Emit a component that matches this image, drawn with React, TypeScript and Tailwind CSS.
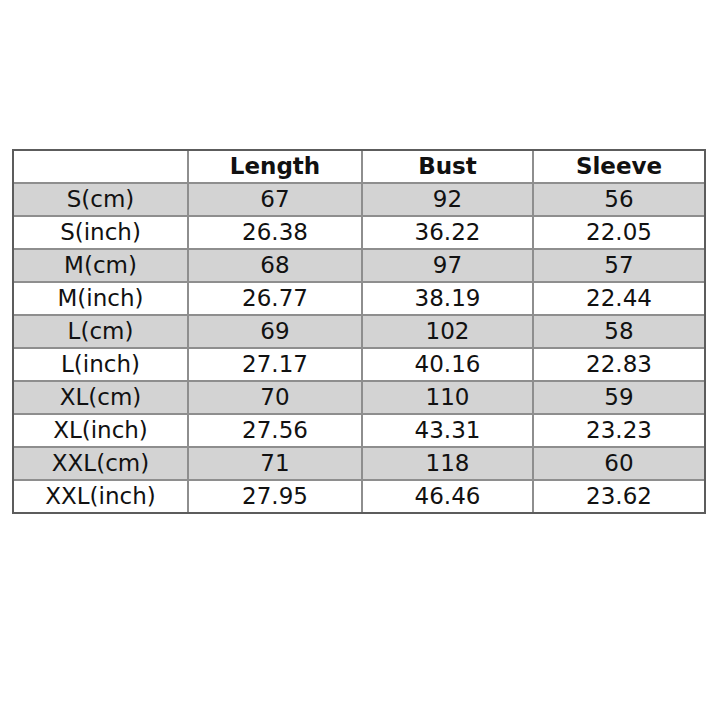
import React from "react";

const rows: [string, string, string, string][] = [
  ["S(cm)", "67", "92", "56"],
  ["S(inch)", "26.38", "36.22", "22.05"],
  ["M(cm)", "68", "97", "57"],
  ["M(inch)", "26.77", "38.19", "22.44"],
  ["L(cm)", "69", "102", "58"],
  ["L(inch)", "27.17", "40.16", "22.83"],
  ["XL(cm)", "70", "110", "59"],
  ["XL(inch)", "27.56", "43.31", "23.23"],
  ["XXL(cm)", "71", "118", "60"],
  ["XXL(inch)", "27.95", "46.46", "23.62"],
];

export default function App() {
  return (
    <div
      className="w-[720px] h-[720px] bg-white pt-[149px] pl-[12px]"
      style={{ fontFamily: '"DejaVu Sans", sans-serif' }}
    >
      <div className="w-[694px] border-2 border-[#5c5c5c] bg-[#8e8e8e] grid grid-cols-[173px_172px_169px_170px] gap-[2px] text-[23px] text-[#111]">
        <div className="bg-white h-[31px]" />
        <div className="bg-white h-[31px] flex items-center justify-center font-bold">Length</div>
        <div className="bg-white h-[31px] flex items-center justify-center font-bold">Bust</div>
        <div className="bg-white h-[31px] flex items-center justify-center font-bold">Sleeve</div>
        {rows.map((r, i) => (
          <React.Fragment key={i}>
            {r.map((c, j) => (
              <div
                key={j}
                className={
                  i % 2 === 0
                    ? "bg-[#d3d3d3] h-[31px] flex items-center justify-center leading-none"
                    : "bg-white h-[31px] flex items-center justify-center leading-none"
                }
              >
                {c}
              </div>
            ))}
          </React.Fragment>
        ))}
      </div>
    </div>
  );
}
